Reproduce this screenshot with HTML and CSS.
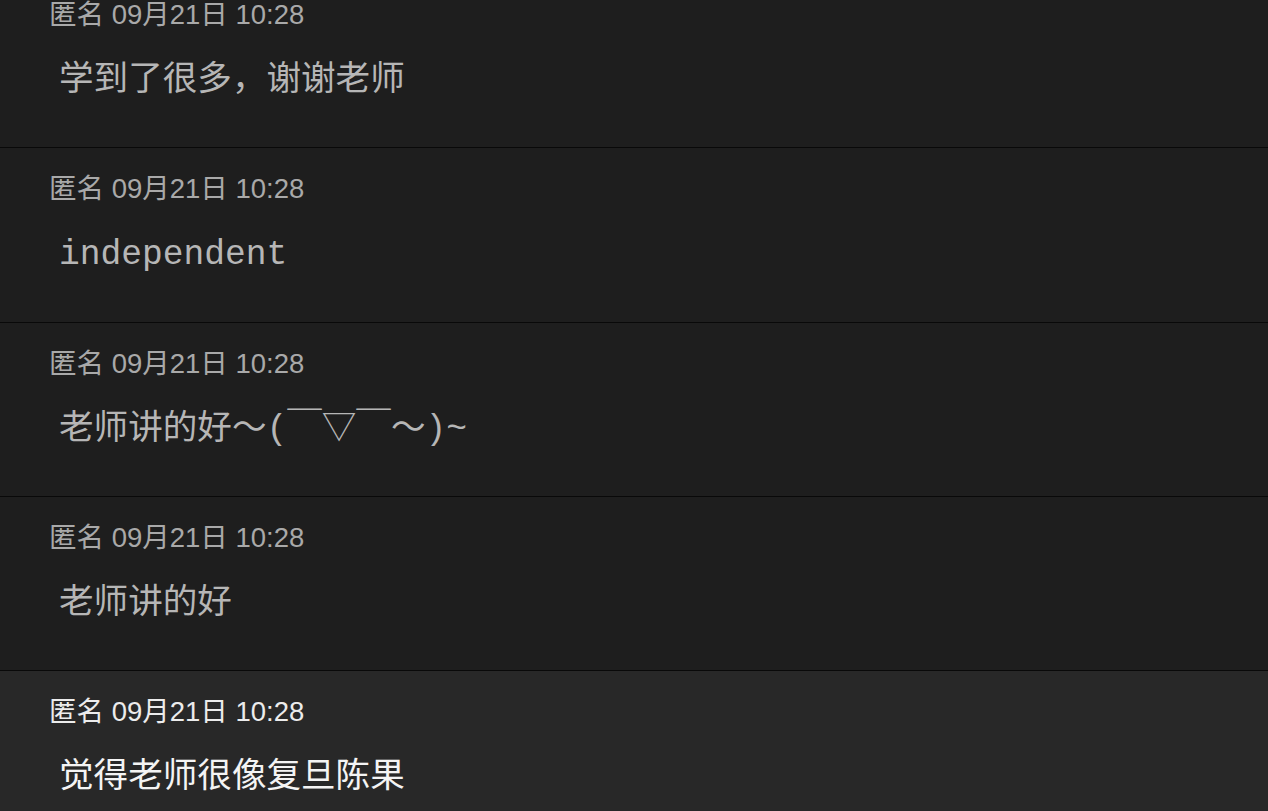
FILE: index.html
```html
<!DOCTYPE html>
<html lang="zh-CN">
<head>
    <meta charset="UTF-8">
    <meta name="viewport" content="width=device-width, initial-scale=1.0">
    <title>评论</title>
    <link rel="stylesheet" href="styles.css">
</head>
<body>
    <div class="comment-list">
        <div class="comment">
            <div class="meta">匿名 09月21日 10:28</div>
            <div class="content">学到了很多，谢谢老师</div>
        </div>
        <div class="comment">
            <div class="meta">匿名 09月21日 10:28</div>
            <div class="content">independent</div>
        </div>
        <div class="comment">
            <div class="meta">匿名 09月21日 10:28</div>
            <div class="content">老师讲的好～(￣▽￣～)~</div>
        </div>
        <div class="comment">
            <div class="meta">匿名 09月21日 10:28</div>
            <div class="content">老师讲的好</div>
        </div>
        <div class="comment active">
            <div class="meta">匿名 09月21日 10:28</div>
            <div class="content">觉得老师很像复旦陈果</div>
        </div>
    </div>
</body>
</html>
```

FILE: styles.css
```css
html, body {
    margin: 0;
    padding: 0;
    background: #1e1e1e;
    overflow: hidden;
}
.comment-list {
    margin-top: -26px;
}
.comment {
    box-sizing: border-box;
    height: 174.3px;
    padding: 26px 50px 0 49px;
    background: #1e1e1e;
    border-bottom: 1.5px solid #090909;
}
.comment.active {
    background: #282828;
    height: 200px;
}
.meta {
    font-family: "Liberation Sans", "Noto Sans CJK SC", sans-serif;
    font-size: 27.5px;
    line-height: 30px;
    color: #a9a9a9;
}
.content {
    margin: 31px 0 0 10px;
    font-family: "Liberation Mono", "Noto Sans CJK SC", monospace;
    font-size: 34.6px;
    line-height: 40px;
    color: #b6b6b6;
}
.active .meta {
    color: #ececec;
}
.active .content {
    color: #f4f4f4;
}
```
